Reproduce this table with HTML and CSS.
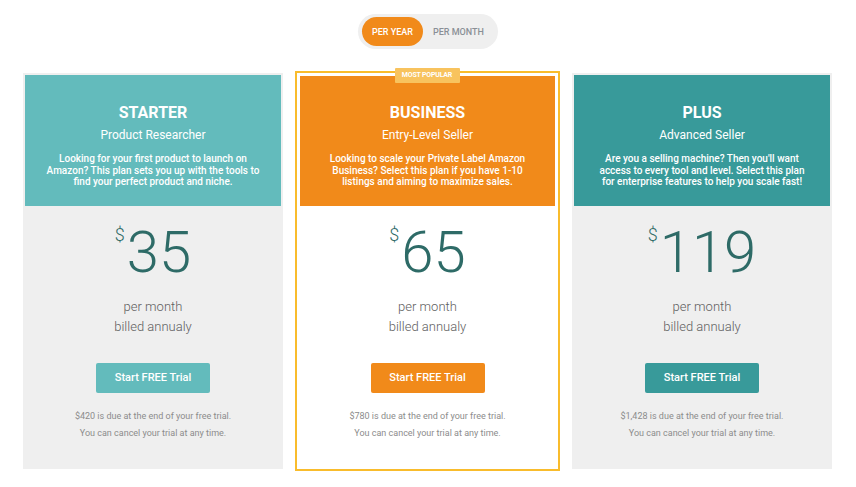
FILE: index.html
```html
<!DOCTYPE html>
<html lang="en">
<head>
    <meta charset="UTF-8">
    <title>Pricing</title>

    <link rel="stylesheet" href="styles.css">

</head>
<body>

<div class="pricing-page">

    <div class="period-toggle">
        <span class="period-option active">PER YEAR</span>
        <span class="period-option">PER MONTH</span>
    </div>

    <div class="plan-row">

        <div class="plan-card plan-starter">
            <div class="plan-head">
                <div class="plan-name">STARTER</div>
                <div class="plan-role">Product Researcher</div>
                <div class="plan-desc">Looking for your first product to launch on<br>Amazon? This plan sets you up with the tools to<br>find your perfect product and niche.</div>
            </div>
            <div class="plan-price"><span class="currency">$</span><span class="amount">35</span></div>
            <div class="plan-period">per month<br>billed annualy</div>
            <a class="trial-button">Start FREE Trial</a>
            <div class="plan-note">$420 is due at the end of your free trial.<br>You can cancel your trial at any time.</div>
        </div>

        <div class="plan-card plan-business">
            <div class="popular-badge">MOST POPULAR</div>
            <div class="plan-head">
                <div class="plan-name">BUSINESS</div>
                <div class="plan-role">Entry-Level Seller</div>
                <div class="plan-desc">Looking to scale your Private Label Amazon<br>Business? Select this plan if you have 1-10<br>listings and aiming to maximize sales.</div>
            </div>
            <div class="plan-price"><span class="currency">$</span><span class="amount">65</span></div>
            <div class="plan-period">per month<br>billed annualy</div>
            <a class="trial-button">Start FREE Trial</a>
            <div class="plan-note">$780 is due at the end of your free trial.<br>You can cancel your trial at any time.</div>
        </div>

        <div class="plan-card plan-plus">
            <div class="plan-head">
                <div class="plan-name">PLUS</div>
                <div class="plan-role">Advanced Seller</div>
                <div class="plan-desc">Are you a selling machine? Then you'll want<br>access to every tool and level. Select this plan<br>for enterprise features to help you scale fast!</div>
            </div>
            <div class="plan-price"><span class="currency">$</span><span class="amount">119</span></div>
            <div class="plan-period">per month<br>billed annualy</div>
            <a class="trial-button">Start FREE Trial</a>
            <div class="plan-note">$1,428 is due at the end of your free trial.<br>You can cancel your trial at any time.</div>
        </div>

    </div>

</div>

</body>
</html>
```

FILE: styles.css
```css
body {
    margin: 0;
    background: #ffffff;
    font-family: Roboto, "Liberation Sans", Arial, sans-serif;
}

.pricing-page {
    padding-top: 14px;
    display: flex;
    flex-direction: column;
    align-items: center;
}

/* year / month switch */
.period-toggle {
    display: flex;
    padding: 3px 4px;
    background: #efefef;
    border-radius: 18px;
    width: 132px;
    height: 29px;
}

.period-option {
    display: flex;
    align-items: center;
    justify-content: center;
    height: 29px;
    font-size: 9px;
    font-weight: 500;
    color: #8a8f96;
    padding: 0 10px;
    border-radius: 15px;
}

.period-option.active {
    background: #f18a1a;
    color: #ffffff;
    width: 41px;
}

/* cards */
.plan-row {
    margin-top: 22px;
    margin-left: -1px;
    display: flex;
    align-items: center;
    gap: 12px;
}

.plan-card {
    position: relative;
    width: 260px;
    height: 396px;
    box-sizing: border-box;
    padding: 2px;
    background: #efefef;
    display: flex;
    flex-direction: column;
    align-items: center;
    text-align: center;
}

.plan-business {
    width: 265px;
    height: 400px;
    padding: 3px;
    background: #ffffff;
    border: 2px solid #f9bc2c;
}

.plan-head {
    align-self: stretch;
    height: 131px;
    box-sizing: border-box;
    padding-top: 28px;
    color: #ffffff;
}

.plan-business .plan-head {
    height: 130px;
    padding-top: 27px;
}

.plan-starter .plan-head { background: #63bbbc; }
.plan-business .plan-head { background: #f18a1a; }
.plan-plus .plan-head { background: #389a9a; }

.plan-name {
    font-size: 16px;
    font-weight: 700;
    line-height: 20px;
}

.plan-role {
    margin-top: 4px;
    font-size: 12px;
    line-height: 16px;
}

.plan-desc {
    margin-top: 10px;
    font-size: 10px;
    font-weight: 500;
    line-height: 11.5px;
}

.popular-badge {
    position: absolute;
    top: -5px;
    left: 50%;
    margin-left: -33px;
    width: 65px;
    height: 15px;
    line-height: 15px;
    background: #f8c35e;
    color: #ffffff;
    font-size: 7px;
    font-weight: 700;
    letter-spacing: -0.2px;
    border-radius: 1px;
}

.plan-price {
    margin-top: 17px;
    display: flex;
    align-items: flex-start;
    color: #2e6b67;
}

.currency {
    font-size: 18px;
    line-height: 1;
    margin-top: 3px;
    margin-right: 2px;
    font-weight: 300;
}

.amount {
    font-size: 58px;
    line-height: 1;
    font-weight: 300;
}

.plan-period {
    margin-top: 16px;
    font-size: 13px;
    font-weight: 300;
    line-height: 20px;
    color: #5e5e5e;
}

.trial-button {
    margin-top: 26px;
    width: 114px;
    height: 30px;
    line-height: 30px;
    border-radius: 2px;
    color: #ffffff;
    font-size: 11px;
    font-weight: 500;
}

.plan-starter .trial-button { background: #63bbbc; }
.plan-business .trial-button { background: #f18a1a; }
.plan-plus .trial-button { background: #389a9a; }

.plan-note {
    margin-top: 15px;
    font-size: 9px;
    line-height: 17px;
    color: #8c8c8c;
}
```
